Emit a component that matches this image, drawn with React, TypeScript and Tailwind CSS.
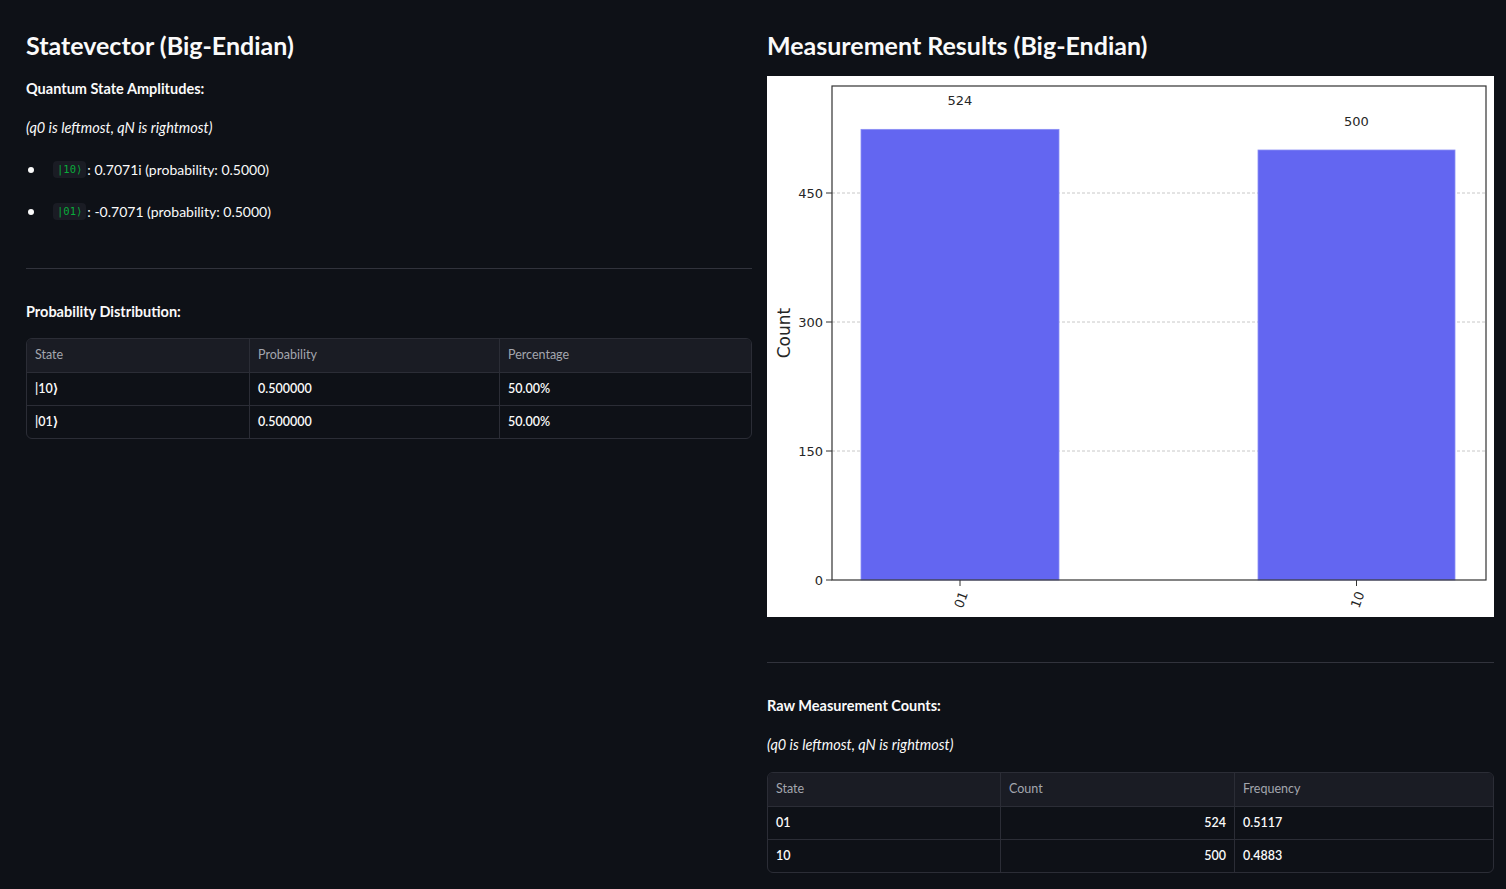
import React from 'react'

const font = { fontFamily: 'Lato, "Noto Sans", sans-serif' }

type Col = { label: string; width: string; align?: 'right' }

function DataTable({ cols, rows }: { cols: Col[]; rows: string[][] }) {
  return (
    <div className="overflow-hidden rounded-md border border-[#2b2d36] text-[12.5px]">
      <div className="flex h-[33px] bg-[#1a1c24] text-[#a3a6ae]">
        {cols.map((c, i) => (
          <div
            key={c.label}
            className={`flex items-center px-2 ${c.width} ${i > 0 ? 'border-l border-[#2b2d36]' : ''}`}
          >
            {c.label}
          </div>
        ))}
      </div>
      {rows.map((r, ri) => (
        <div key={ri} className="flex h-[33px] border-t border-[#2b2d36] font-semibold text-[#fafafa]">
          {r.map((v, i) => (
            <div
              key={i}
              className={`flex items-center px-2 ${cols[i].width} ${cols[i].align === 'right' ? 'justify-end' : ''} ${i > 0 ? 'border-l border-[#2b2d36]' : ''}`}
            >
              {v}
            </div>
          ))}
        </div>
      ))}
    </div>
  )
}

function Ket({ v }: { v: string }) {
  return (
    <span className="mr-[1px] rounded bg-[#1a1c24] px-[4px] py-[1px] text-[10.5px] text-[#09ab3b]" style={{ fontFamily: '"DejaVu Sans Mono", monospace' }}>
      |{v}⟩
    </span>
  )
}

function Histogram() {
  const y = (c: number) => 504 - c * 0.86
  const ticks = [0, 150, 300, 450]
  const bars = [
    { label: '01', count: 524, x: 94, w: 198 },
    { label: '10', count: 500, x: 491, w: 197 },
  ]
  return (
    <svg width="727" height="541" viewBox="0 0 727 541" className="block bg-white" style={{ fontFamily: '"DejaVu Sans", sans-serif' }}>
      {ticks.slice(1).map((t) => (
        <line key={t} x1="65" x2="719" y1={y(t)} y2={y(t)} stroke="#c8c8c8" strokeDasharray="3 2" strokeWidth="1" />
      ))}
      {bars.map((b) => (
        <g key={b.label}>
          <rect x={b.x} y={y(b.count)} width={b.w} height={504 - y(b.count)} fill="#6366f1" stroke="#8b8ef5" strokeWidth="0.8" />
          <text x={b.x + b.w / 2} y={y(b.count) - 24} textAnchor="middle" fontSize="13" fill="#262626">
            {b.count}
          </text>
          <line x1={b.x + b.w / 2} x2={b.x + b.w / 2} y1="504" y2="510" stroke="#333" />
          <text
            x={b.x + b.w / 2 + 2}
            y="524"
            fontSize="13"
            fill="#262626"
            textAnchor="middle"
            dominantBaseline="middle"
            transform={`rotate(-70 ${b.x + b.w / 2 + 2} 524)`}
          >
            {b.label}
          </text>
        </g>
      ))}
      <rect x="65" y="10" width="654" height="494" fill="none" stroke="#333" strokeWidth="1.2" />
      {ticks.map((t) => (
        <g key={t}>
          <line x1="59" x2="65" y1={y(t)} y2={y(t)} stroke="#333" />
          <text x="56" y={y(t) + 1} textAnchor="end" dominantBaseline="middle" fontSize="13" fill="#262626">
            {t}
          </text>
        </g>
      ))}
      <text x="18" y="257" fontSize="17" fill="#262626" textAnchor="middle" dominantBaseline="middle" transform="rotate(-90 18 257)">
        Count
      </text>
    </svg>
  )
}

export default function App() {
  return (
    <div className="min-h-[889px] bg-[#0e1117] text-[#fafafa]" style={font}>
      <div className="flex gap-[15px] pl-[26px] pr-[12px] pt-[28px]">
        <div className="w-[726px]">
          <h3 className="h-[34px] text-[25px] font-bold leading-[34px]">Statevector (Big-Endian)</h3>
          <div className="mt-[16px] h-[21px] text-[14.5px] font-bold leading-[21px]">Quantum State Amplitudes:</div>
          <div className="mt-[18px] h-[21px] text-[14.5px] italic leading-[21px]">(q0 is leftmost, qN is rightmost)</div>
          <ul className="mt-[21px] flex flex-col gap-[21px] text-[14px]">
            <li className="flex h-[21px] items-center">
              <span className="mr-[19px] ml-[2px] h-[6px] w-[6px] rounded-full bg-[#fafafa]" />
              <Ket v="10" />: 0.7071i (probability: 0.5000)
            </li>
            <li className="flex h-[21px] items-center">
              <span className="mr-[19px] ml-[2px] h-[6px] w-[6px] rounded-full bg-[#fafafa]" />
              <Ket v="01" />: -0.7071 (probability: 0.5000)
            </li>
          </ul>
          <hr className="mt-[46px] border-[#31333c]" />
          <div className="mt-[32px] h-[21px] text-[14.5px] font-bold leading-[21px]">Probability Distribution:</div>
          <div className="mt-[16px]">
            <DataTable
              cols={[
                { label: 'State', width: 'w-[222px]' },
                { label: 'Probability', width: 'w-[250px]' },
                { label: 'Percentage', width: 'flex-1' },
              ]}
              rows={[
                ['|10⟩', '0.500000', '50.00%'],
                ['|01⟩', '0.500000', '50.00%'],
              ]}
            />
          </div>
        </div>
        <div className="w-[727px]">
          <h3 className="h-[34px] text-[25px] font-bold leading-[34px]">Measurement Results (Big-Endian)</h3>
          <div className="mt-[14px]">
            <Histogram />
          </div>
          <hr className="mt-[45px] border-[#31333c]" />
          <div className="mt-[32px] h-[21px] text-[14.5px] font-bold leading-[21px]">Raw Measurement Counts:</div>
          <div className="mt-[18px] h-[21px] text-[14.5px] italic leading-[21px]">(q0 is leftmost, qN is rightmost)</div>
          <div className="mt-[17px]">
            <DataTable
              cols={[
                { label: 'State', width: 'w-[232px]' },
                { label: 'Count', width: 'w-[234px]', align: 'right' },
                { label: 'Frequency', width: 'flex-1' },
              ]}
              rows={[
                ['01', '524', '0.5117'],
                ['10', '500', '0.4883'],
              ]}
            />
          </div>
        </div>
      </div>
    </div>
  )
}
